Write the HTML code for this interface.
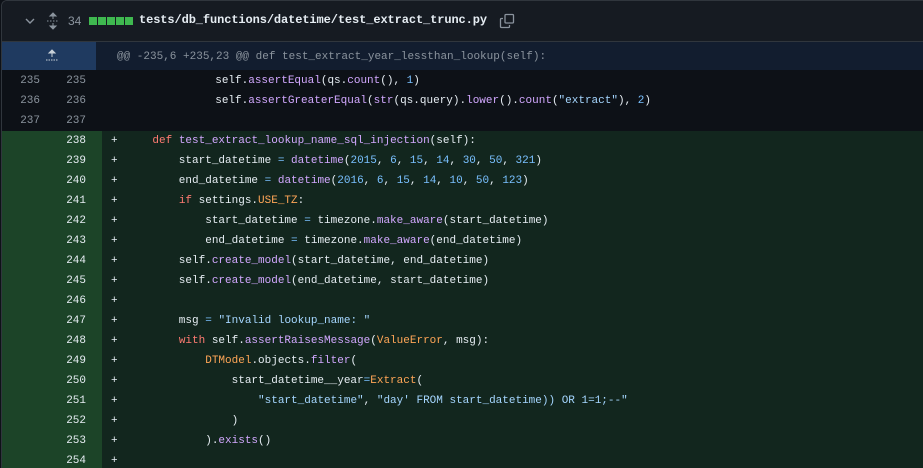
<!DOCTYPE html>
<html><head><meta charset="utf-8"><style>
*{margin:0;padding:0;box-sizing:border-box}
html,body{width:923px;height:468px;overflow:hidden}
body{position:relative;background:#0d1117;font-family:"Liberation Mono",monospace;color:#e6edf3}
.wrap{position:absolute;left:1px;top:0;width:922px;height:468px;border:1px solid #30363d;border-right:none;border-bottom:none;border-radius:6px 0 0 0;overflow:hidden;background:#0d1117}
.hdr{position:absolute;left:0;top:0;width:100%;height:41px;background:#161b22;border-bottom:1px solid #30363d}
.row{position:absolute;left:0;width:100%;height:20px;font-size:11px;line-height:20px;white-space:pre}
.n1,.n2{position:absolute;top:0;width:40px;text-align:right;color:#8b949e}
.n1{left:-2px}.n2{left:44px}
.g{position:absolute;left:0;top:0;width:100px;height:20px}
.c{position:absolute;top:0}
.add{background:#12261e}
.add .g{background:#1c4428}
.add .n2{color:#e6edf3}
.k{color:#ff7b72}.f{color:#d2a8ff}.o{color:#ffa657}.nm{color:#79c0ff}.s{color:#a5d6ff}
</style></head><body>
<div class="wrap">
<div class="hdr">
<svg style="position:absolute;left:22px;top:15px" width="12" height="10" viewBox="0 0 12 10"><path d="M2 3 L6 7 L10 3" stroke="#8b949e" stroke-width="1.4" fill="none"/></svg>
<svg style="position:absolute;left:44px;top:11px" width="14" height="18" viewBox="0 0 14 18"><path d="M7 1 L4 4 H10 Z M7 17 L4 14 H10 Z M7 4 V7 M7 11 V14" stroke="#8b949e" fill="#8b949e" stroke-width="1"/><path d="M1 9 H13" stroke="#8b949e" stroke-dasharray="1.5 1.5"/></svg>
<span style="position:absolute;left:66px;top:13px;font-size:12px;color:#8b949e;font-family:'Liberation Sans',sans-serif">34</span>
<div style="position:absolute;left:87px;top:16px;display:flex;gap:1px"><i style="width:8px;height:8px;background:#3fb950"></i><i style="width:8px;height:8px;background:#3fb950"></i><i style="width:8px;height:8px;background:#3fb950"></i><i style="width:8px;height:8px;background:#3fb950"></i><i style="width:8px;height:8px;background:#3fb950"></i></div>
<span style="position:absolute;left:137px;top:12px;font-size:12px;color:#e6edf3;font-weight:bold;letter-spacing:-0.1px">tests/db_functions/datetime/test_extract_trunc.py</span>
<svg style="position:absolute;left:497px;top:12px" width="16" height="16" viewBox="0 0 16 16"><rect x="6" y="1.5" width="8.5" height="8.5" rx="1" stroke="#8b949e" fill="none" stroke-width="1.3"/><path d="M4 5.5 H2.5 a1 1 0 0 0 -1 1 V13.5 a1 1 0 0 0 1 1 H9.5 a1 1 0 0 0 1 -1 V12" stroke="#8b949e" fill="none" stroke-width="1.3"/></svg>
</div>
<div style="position:absolute;left:0;top:41px;width:100%;height:28px;background:#121d2f">
<div style="position:absolute;left:0;top:0;width:94px;height:28px;background:#1f3a60"></div>
<svg style="position:absolute;left:44px;top:7px" width="12" height="14" viewBox="0 0 12 14"><path d="M6 1 L3 4 H9 Z M6 4 V8" stroke="#c9d1d9" fill="#c9d1d9"/><path d="M0 11 H12" stroke="#c9d1d9" stroke-dasharray="1.5 1"/></svg>
<span style="position:absolute;left:115px;top:1px;line-height:28px;font-size:11px;color:#8b949e;white-space:pre">@@ -235,6 +235,23 @@ def test_extract_year_lessthan_lookup(self):</span>
</div>
<div class="row" style="top:70px"><span class="n1">235</span><span class="n2">235</span><span class="c" style="left:134px">            self.<span class="f">assertEqual</span>(qs.<span class="f">count</span>(), <span class="nm">1</span>)</span></div>
<div class="row" style="top:90px"><span class="n1">236</span><span class="n2">236</span><span class="c" style="left:134px">            self.<span class="f">assertGreaterEqual</span>(<span class="f">str</span>(qs.query).<span class="f">lower</span>().<span class="f">count</span>(<span class="s">"extract"</span>), <span class="nm">2</span>)</span></div>
<div class="row" style="top:110px"><span class="n1">237</span><span class="n2">237</span></div>
<div class="row add" style="top:130px"><span class="g"></span><span class="n2">238</span><span class="c" style="left:109px">+</span><span class="c" style="left:124px">    <span class="k">def</span> <span class="f">test_extract_lookup_name_sql_injection</span>(self):</span></div>
<div class="row add" style="top:150px"><span class="g"></span><span class="n2">239</span><span class="c" style="left:109px">+</span><span class="c" style="left:124px">        start_datetime <span class="nm">=</span> <span class="f">datetime</span>(<span class="nm">2015</span>, <span class="nm">6</span>, <span class="nm">15</span>, <span class="nm">14</span>, <span class="nm">30</span>, <span class="nm">50</span>, <span class="nm">321</span>)</span></div>
<div class="row add" style="top:170px"><span class="g"></span><span class="n2">240</span><span class="c" style="left:109px">+</span><span class="c" style="left:124px">        end_datetime <span class="nm">=</span> <span class="f">datetime</span>(<span class="nm">2016</span>, <span class="nm">6</span>, <span class="nm">15</span>, <span class="nm">14</span>, <span class="nm">10</span>, <span class="nm">50</span>, <span class="nm">123</span>)</span></div>
<div class="row add" style="top:190px"><span class="g"></span><span class="n2">241</span><span class="c" style="left:109px">+</span><span class="c" style="left:124px">        <span class="k">if</span> settings.<span class="o">USE_TZ</span>:</span></div>
<div class="row add" style="top:210px"><span class="g"></span><span class="n2">242</span><span class="c" style="left:109px">+</span><span class="c" style="left:124px">            start_datetime <span class="nm">=</span> timezone.<span class="f">make_aware</span>(start_datetime)</span></div>
<div class="row add" style="top:230px"><span class="g"></span><span class="n2">243</span><span class="c" style="left:109px">+</span><span class="c" style="left:124px">            end_datetime <span class="nm">=</span> timezone.<span class="f">make_aware</span>(end_datetime)</span></div>
<div class="row add" style="top:250px"><span class="g"></span><span class="n2">244</span><span class="c" style="left:109px">+</span><span class="c" style="left:124px">        self.<span class="f">create_model</span>(start_datetime, end_datetime)</span></div>
<div class="row add" style="top:270px"><span class="g"></span><span class="n2">245</span><span class="c" style="left:109px">+</span><span class="c" style="left:124px">        self.<span class="f">create_model</span>(end_datetime, start_datetime)</span></div>
<div class="row add" style="top:290px"><span class="g"></span><span class="n2">246</span><span class="c" style="left:109px">+</span></div>
<div class="row add" style="top:310px"><span class="g"></span><span class="n2">247</span><span class="c" style="left:109px">+</span><span class="c" style="left:124px">        msg <span class="nm">=</span> <span class="s">"Invalid lookup_name: "</span></span></div>
<div class="row add" style="top:330px"><span class="g"></span><span class="n2">248</span><span class="c" style="left:109px">+</span><span class="c" style="left:124px">        <span class="k">with</span> self.<span class="f">assertRaisesMessage</span>(<span class="o">ValueError</span>, msg):</span></div>
<div class="row add" style="top:350px"><span class="g"></span><span class="n2">249</span><span class="c" style="left:109px">+</span><span class="c" style="left:124px">            <span class="o">DTModel</span>.objects.<span class="f">filter</span>(</span></div>
<div class="row add" style="top:370px"><span class="g"></span><span class="n2">250</span><span class="c" style="left:109px">+</span><span class="c" style="left:124px">                start_datetime__year<span class="nm">=</span><span class="o">Extract</span>(</span></div>
<div class="row add" style="top:390px"><span class="g"></span><span class="n2">251</span><span class="c" style="left:109px">+</span><span class="c" style="left:124px">                    <span class="s">"start_datetime"</span>, <span class="s">"day' FROM start_datetime)) OR 1=1;--"</span></span></div>
<div class="row add" style="top:410px"><span class="g"></span><span class="n2">252</span><span class="c" style="left:109px">+</span><span class="c" style="left:124px">                )</span></div>
<div class="row add" style="top:430px"><span class="g"></span><span class="n2">253</span><span class="c" style="left:109px">+</span><span class="c" style="left:124px">            ).<span class="f">exists</span>()</span></div>
<div class="row add" style="top:450px"><span class="g"></span><span class="n2">254</span><span class="c" style="left:109px">+</span></div>
</div>
</body></html>
